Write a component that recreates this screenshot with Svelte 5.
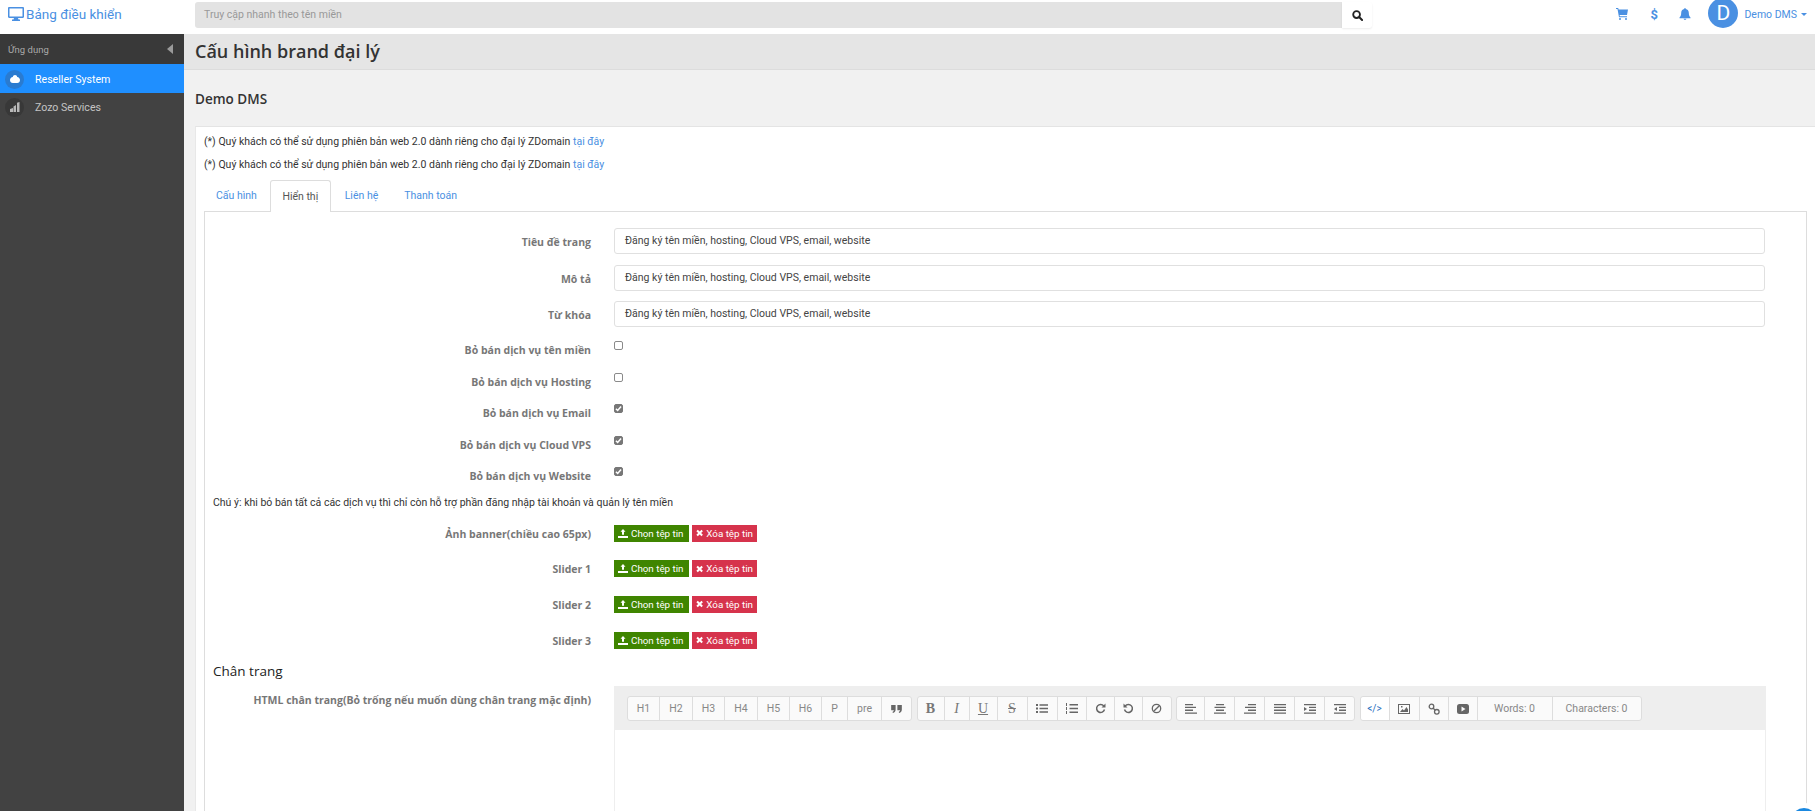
<script>
  const fields = ["Tiêu đề trang", "Mô tả", "Từ khóa"];
  const value = "Đăng ký tên miền, hosting, Cloud VPS, email, website";
  const checks = [
    { label: "Bỏ bán dịch vụ tên miền", on: false },
    { label: "Bỏ bán dịch vụ Hosting", on: false },
    { label: "Bỏ bán dịch vụ Email", on: true },
    { label: "Bỏ bán dịch vụ Cloud VPS", on: true },
    { label: "Bỏ bán dịch vụ Website", on: true }
  ];
  const uploads = ["Ảnh banner(chiều cao 65px)", "Slider 1", "Slider 2", "Slider 3"];
  const headings = [
    { t: "H1", w: 32 }, { t: "H2", w: 33 }, { t: "H3", w: 32 }, { t: "H4", w: 33 },
    { t: "H5", w: 32 }, { t: "H6", w: 32 }, { t: "P", w: 26 }, { t: "pre", w: 34 }
  ];
</script>

<div class="page">
  <header class="topbar">
    <a class="brand">
      <svg width="16" height="14" viewBox="0 0 16 14"><path fill="#4a90e2" d="M1.2 0h13.6c.7 0 1.2.5 1.2 1.2v8.600c0 .7-.5 1.200-1.200 1.200H1.200C.5 11 0 10.500 0 9.800V1.200C0 .5.500 0 1.200 0zM1.500 1.500v8h13v-8zM6 11h4l.5 1.500H12V14H4v-1.500h1.500z"/></svg>
      <span>Bảng điều khiển</span>
    </a>
    <div class="search">
      <div class="search-input">Truy cập nhanh theo tên miền</div>
      <div class="search-btn">
        <svg width="11" height="11" viewBox="0 0 12 12"><circle cx="5" cy="5" r="3.700" fill="none" stroke="#222" stroke-width="2"/><path d="M8 8l3 3" stroke="#222" stroke-width="2.200" stroke-linecap="round"/></svg>
      </div>
    </div>
    <div class="top-right">
      <svg class="ic cart" width="12" height="12" viewBox="0 0 12 12"><path fill="#4a90e2" d="M0 0h2.200l.4 1.500H12l-1 5.500H3.600l.2 1.200H11v1H3L1.500 1H0z"/><circle cx="4" cy="11" r="1" fill="#4a90e2"/><circle cx="10" cy="11" r="1" fill="#4a90e2"/></svg>
      <span class="dollar">$</span>
      <svg class="ic bell" width="12" height="12" viewBox="0 0 12 12"><path fill="#4a90e2" d="M6 0c.5 0 .8.400.8.900C8.700 1.300 9.800 2.800 9.800 4.700c0 2.800.7 3.700 1.700 4.800v.7H.5v-.7c1-1.100 1.700-2 1.700-4.800C2.200 2.800 3.300 1.300 5.200.9 5.200.4 5.500 0 6 0zM4.600 10.800h2.800C7.300 11.500 6.700 12 6 12s-1.300-.5-1.400-1.200z"/></svg>
      <span class="avatar">D</span>
      <span class="user">Demo DMS</span>
      <span class="caret"></span>
    </div>
  </header>

  <div class="body">
    <aside class="sidebar">
      <div class="side-head">
        <span>Ứng dụng</span>
        <span class="collapse"></span>
      </div>
      <div class="side-item active">
        <span class="side-ic">
          <svg width="10" height="8" viewBox="0 0 10 8"><path fill="#fff" d="M5 0c1.200 0 2.100.8 2.200 1.900C8.700 2.100 10 3.200 10 5c0 1.700-1.200 3-2.800 3H2.800C1.200 8 0 6.700 0 5c0-1.800 1.300-2.900 2.800-3.100C2.900.8 3.800 0 5 0z"/></svg>
        </span>
        Reseller System
      </div>
      <div class="side-item">
        <span class="side-ic dark">
          <svg width="10" height="10" viewBox="0 0 10 10"><path fill="#b8b8b8" d="M0 7l3-1v4H0zM3.500 4.500L6 3v7H3.500zM7 .8L9.500 0v10H7z"/></svg>
        </span>
        Zozo Services
      </div>
    </aside>

    <main class="main">
      <div class="title-bar"><h1>Cấu hình brand đại lý</h1></div>
      <h2 class="sub">Demo DMS</h2>

      <section class="card">
        <p class="note">(*) Quý khách có thể sử dụng phiên bản web 2.0 dành riêng cho đại lý ZDomain <a>tại đây</a></p>
        <p class="note">(*) Quý khách có thể sử dụng phiên bản web 2.0 dành riêng cho đại lý ZDomain <a>tại đây</a></p>

        <nav class="tabs">
          <a>Cấu hình</a>
          <a class="on">Hiển thị</a>
          <a>Liên hệ</a>
          <a>Thanh toán</a>
        </nav>

        <div class="panel">
          <div class="text-rows">
            {#each fields as f}
              <div class="row text-row">
                <label>{f}</label>
                <div class="input">{value}</div>
              </div>
            {/each}
          </div>

          {#each checks as c}
            <div class="row check-row">
              <label>{c.label}</label>
              <span class="box" class:on={c.on}>
                {#if c.on}
                  <svg width="7" height="7" viewBox="0 0 9 9"><path d="M1.200 4.800l2.200 2.200 4.400-5" fill="none" stroke="#fff" stroke-width="2"/></svg>
                {/if}
              </span>
            </div>
          {/each}

          <p class="warn">Chú ý: khi bỏ bán tất cả các dịch vụ thì chỉ còn hỗ trợ phần đăng nhập tài khoản và quản lý tên miền</p>

          {#each uploads as u}
            <div class="row upload-row">
              <label>{u}</label>
              <div class="btns">
                <span class="btn green">
                  <svg width="10" height="9" viewBox="0 0 10 9"><path fill="#fff" d="M5 0l2.500 2.800H6v3H4v-3H2.500zM0 7h10v2H0z"/></svg>
                  Chọn tệp tin
                </span>
                <span class="btn red">
                  <svg width="8" height="8" viewBox="0 0 8 8"><path d="M1.200 1.200l5.600 5.600M6.800 1.200L1.200 6.800" stroke="#fff" stroke-width="2.200"/></svg>
                  Xóa tệp tin
                </span>
              </div>
            </div>
          {/each}

          <h3 class="footer-title">Chân trang</h3>

          <div class="row editor-row">
            <label>HTML chân trang(Bỏ trống nếu muốn dùng chân trang mặc định)</label>
            <div class="editor">
              <div class="toolbar">
                <div class="group">
                  {#each headings as h}
                    <span class="tb" style="width:{h.w}px">{h.t}</span>
                  {/each}
                  <span class="tb" style="width:29px"><svg width="11" height="8" viewBox="0 0 12 9"><path fill="#666" d="M0 0h5v5c0 2-1 3.500-3 4L1.500 7.800C2.500 7.400 3 6.700 3 6H0zM7 0h5v5c0 2-1 3.500-3 4L8.500 7.800C9.500 7.400 10 6.700 10 6H7z"/></svg></span>
                </div>
                <div class="group">
                  <span class="tb serif b" style="width:27px">B</span>
                  <span class="tb serif i" style="width:25px">I</span>
                  <span class="tb serif u" style="width:28px">U</span>
                  <span class="tb serif s" style="width:30px">S</span>
                  <span class="tb" style="width:30px"><svg width="12" height="9" viewBox="0 0 12 9"><path fill="#666" d="M0 0h2v2H0zM0 3.500h2v2H0zM0 7h2v2H0zM3.500 .3H12v1.400H3.500zM3.500 3.800H12v1.400H3.500zM3.500 7.300H12v1.400H3.500z"/></svg></span>
                  <span class="tb" style="width:29px"><svg width="12" height="11" viewBox="0 0 12 11"><path fill="#666" d="M0 0h1v3H0zM0 4h1v3H0zM0 8h1v3H0zM3.500 1H12v1.600H3.500zM3.500 4.700H12v1.600H3.500zM3.500 8.400H12V10H3.500z"/></svg></span>
                  <span class="tb" style="width:28px"><svg width="11" height="11" viewBox="0 0 11 11"><path d="M8.800 3a4 4 0 1 0 .7 3.500" fill="none" stroke="#666" stroke-width="1.500"/><path fill="#666" d="M10.500 .5v4h-4z"/></svg></span>
                  <span class="tb" style="width:28px"><svg width="11" height="11" viewBox="0 0 11 11"><path d="M2.200 3a4 4 0 1 1-.7 3.500" fill="none" stroke="#666" stroke-width="1.500"/><path fill="#666" d="M.5 .5v4h4z"/></svg></span>
                  <span class="tb" style="width:28px"><svg width="11" height="11" viewBox="0 0 11 11"><circle cx="5.500" cy="5.500" r="4.200" fill="none" stroke="#666" stroke-width="1.300"/><path d="M2.700 8.300l5.600-5.600" stroke="#666" stroke-width="1.300"/></svg></span>
                </div>
                <div class="group">
                  <span class="tb" style="width:28px"><svg width="12" height="10" viewBox="0 0 12 10"><path fill="#666" d="M0 0h8v1.300H0zM0 2.800h11v1.300H0zM0 5.600h8v1.300H0zM0 8.400h12v1.400H0z"/></svg></span>
                  <span class="tb" style="width:30px"><svg width="12" height="10" viewBox="0 0 12 10"><path fill="#666" d="M2 0h8v1.300H2zM.5 2.800h11v1.300H.500zM2 5.600h8v1.300H2zM0 8.400h12v1.400H0z"/></svg></span>
                  <span class="tb" style="width:30px"><svg width="12" height="10" viewBox="0 0 12 10"><path fill="#666" d="M4 0h8v1.300H4zM1 2.800h11v1.300H1zM4 5.600h8v1.300H4zM0 8.400h12v1.400H0z"/></svg></span>
                  <span class="tb" style="width:30px"><svg width="12" height="10" viewBox="0 0 12 10"><path fill="#666" d="M0 0h12v1.300H0zM0 2.800h12v1.300H0zM0 5.600h12v1.300H0zM0 8.400h12v1.400H0z"/></svg></span>
                  <span class="tb" style="width:30px"><svg width="12" height="10" viewBox="0 0 12 10"><path fill="#666" d="M0 0h12v1.300H0zM5 2.800h7v1.300H5zM5 5.600h7v1.300H5zM0 8.400h12v1.400H0zM0 3l3 2-3 2z"/></svg></span>
                  <span class="tb" style="width:29px"><svg width="12" height="10" viewBox="0 0 12 10"><path fill="#666" d="M0 0h12v1.300H0zM5 2.800h7v1.300H5zM5 5.600h7v1.300H5zM0 8.400h12v1.400H0zM3 3L0 5l3 2z"/></svg></span>
                </div>
                <div class="group">
                  <span class="tb white code" style="width:29px">&lt;/&gt;</span>
                  <span class="tb" style="width:30px"><svg width="12" height="10" viewBox="0 0 12 10"><path fill="#666" d="M0 0h12v10H0zM1 1v8h10V1zM2 8l2.500-3 1.500 1.500L8.500 3 10 5.500V8zM3 2h1.500v1.500H3z" fill-rule="evenodd"/></svg></span>
                  <span class="tb" style="width:29px"><svg width="12" height="12" viewBox="0 0 12 12"><circle cx="3.500" cy="3.500" r="2.300" fill="none" stroke="#666" stroke-width="1.300"/><circle cx="8.800" cy="8.800" r="2.300" fill="none" stroke="#666" stroke-width="1.300"/><path d="M5 5l2.200 2.200" stroke="#666" stroke-width="1.300"/></svg></span>
                  <span class="tb" style="width:29px"><svg width="12" height="10" viewBox="0 0 12 10"><rect width="12" height="10" rx="2.500" fill="#666"/><path fill="#fafafa" d="M4.500 2.500l4 2.500-4 2.500z"/></svg></span>
                  <span class="tb wide" style="width:75px">Words: 0</span>
                  <span class="tb wide" style="width:88px">Characters: 0</span>
                </div>
              </div>
              <div class="edit-area"></div>
            </div>
          </div>
        </div>
      </section>
    </main>
  </div>

  <span class="chat"></span>
</div>

<style>
  :global(body) {
    margin: 0;
    background: #f1f1f1;
    font-family: Roboto, "Liberation Sans", sans-serif;
  }

  .page {
    height: 811px;
    overflow: hidden;
    position: relative;
  }

  /* top bar */
  .topbar {
    height: 34px;
    background: #fff;
    display: flex;
    align-items: flex-start;
  }

  .brand {
    width: 195px;
    height: 28px;
    padding-left: 8px;
    box-sizing: border-box;
    display: flex;
    align-items: center;
    gap: 2px;
    color: #4a90e2;
    font-size: 13.500px;
  }

  .search {
    margin-top: 2px;
    width: 1177px;
    display: flex;
  }

  .search-input {
    flex: 1;
    height: 26px;
    line-height: 25px;
    padding-left: 9px;
    background: #e3e3e3;
    border-radius: 3px 0 0 3px;
    color: #999;
    font-size: 10.500px;
  }

  .search-btn {
    width: 30px;
    height: 26px;
    display: flex;
    align-items: center;
    justify-content: center;
    border-radius: 0 3px 3px 0;
    box-shadow: 0 1px 2px rgba(0, 0, 0, 0.08);
  }

  .top-right {
    margin-left: auto;
    height: 28px;
    display: flex;
    align-items: center;
    padding-right: 8px;
    color: #4a90e2;
  }

  .ic { margin-right: 20px; }
  .cart { margin-right: 22px; }
  .bell { margin-right: 17px; }

  .dollar {
    font-size: 13px;
    font-weight: 700;
    width: 13px;
    margin-right: 16px;
  }

  .avatar {
    width: 30px;
    height: 30px;
    margin-top: -2px;
    border-radius: 50%;
    background: #4a90e2;
    color: #fff;
    font-size: 21px;
    line-height: 30px;
    text-align: center;
  }

  .user {
    margin-left: 6px;
    font-size: 10.500px;
  }

  .caret {
    margin-left: 4px;
    border: 3px solid transparent;
    border-top-color: #4a90e2;
    border-bottom: 0;
  }

  .body {
    display: flex;
    height: 777px;
  }

  /* sidebar */
  .sidebar {
    width: 184px;
    flex: none;
    background: #424242;
    color: #c4c4c4;
  }

  .side-head {
    height: 30px;
    background: #393939;
    display: flex;
    align-items: center;
    justify-content: space-between;
    padding: 0 11px 0 8px;
    font-size: 9.500px;
    color: #aaa;
  }

  .collapse {
    border: 5px solid transparent;
    border-right: 6px solid #9a9a9a;
    border-left: 0;
  }

  .side-item {
    height: 29px;
    display: flex;
    align-items: center;
    font-size: 10.600px;
    padding-left: 5px;
  }

  .side-item.active {
    height: 28px;
    padding-top: 1px;
    background: #1f8fff;
    color: #fff;
  }

  .side-item + .side-item { margin-top: -1px; height: 30px; }

  .side-ic {
    width: 19px;
    height: 19px;
    margin-right: 11px;
    border-radius: 50%;
    background: #2a7bd0;
    display: flex;
    align-items: center;
    justify-content: center;
  }

  .side-ic.dark { background: #383838; }

  /* main */
  .main {
    flex: 1;
    min-width: 0;
  }

  .title-bar {
    height: 35px;
    background: #e5e5e5;
    border-bottom: 1px solid #dcdcdc;
    padding-left: 11px;
  }

  h1 {
    margin: 0;
    font-family: "Open Sans", sans-serif;
    font-size: 18px;
    font-weight: 600;
    line-height: 35px;
    color: #333;
  }

  .sub {
    margin: 0;
    padding: 20px 0 0 11px;
    height: 36px;
    font-family: "Open Sans", sans-serif;
    font-size: 13.500px;
    font-weight: 600;
    line-height: 19px;
    color: #333;
  }

  .card {
    margin-left: 11px;
    height: 700px;
    padding: 0 8px;
    background: #fff;
    border-top: 1px solid #e4e4e4;
    border-left: 1px solid #e8e8e8;
  }

  .note {
    margin: 0;
    height: 23px;
    line-height: 23px;
    font-size: 10.500px;
    color: #333;
  }

  .note:first-child { margin-top: 3px; }

  .note a { color: #4a90e2; }

  .tabs {
    display: flex;
    height: 32px;
    margin-top: 4px;
    font-size: 10.500px;
    color: #4a90e2;
  }

  .tabs a {
    padding: 0 12px;
    margin-right: 2px;
    line-height: 32px;
    color: #4a90e2;
  }

  .tabs a:first-child { margin-right: 1px; }

  .tabs a.on {
    padding: 0 11.500px;
    color: #555;
    background: #fff;
    height: 32px;
    box-sizing: border-box;
    border: 1px solid #ddd;
    border-bottom: 0;
    border-radius: 3px 3px 0 0;
    line-height: 31px;
    position: relative;
    z-index: 1;
  }

  .panel {
    border: 1px solid #ddd;
    height: 700px;
    padding-top: 16px;
    margin-top: -1px;
  }

  .row {
    display: flex;
  }

  .row label {
    width: 386px;
    margin-right: 23px;
    text-align: right;
    flex: none;
    font-family: "Open Sans", sans-serif;
    font-weight: 700;
    font-size: 10.500px;
    color: #777;
  }

  .text-rows { height: 103px; }

  .text-row {
    height: 36.500px;
  }

  .text-row label { line-height: 28px; }

  .input {
    width: 1151px;
    height: 26px;
    box-sizing: border-box;
    border: 1px solid #e0e0e0;
    border-radius: 3px;
    line-height: 24px;
    padding-left: 10px;
    font-size: 10.500px;
    color: #444;
  }

  .check-row {
    height: 31.500px;
  }

  .check-row label { line-height: 38px; }

  .box {
    width: 7px;
    height: 7px;
    margin-top: 10px;
    border: 1px solid #8a8a8a;
    border-radius: 2px;
    background: #fff;
    display: block;
  }

  .box.on {
    background: #777;
    border-color: #777;
  }

  .box svg { display: block; }

  .warn {
    margin: 0 0 0 8px;
    height: 31px;
    line-height: 28px;
    font-size: 10.500px;
    color: #333;
  }

  .upload-row {
    height: 35.700px;
  }

  .upload-row label { line-height: 28px; }

  .btns {
    display: flex;
    gap: 3px;
    margin-top: 5px;
  }

  .btn {
    height: 17px;
    display: flex;
    align-items: center;
    gap: 3px;
    padding: 0 4px;
    font-size: 9.800px;
    white-space: nowrap;
    color: #fff;
  }

  .green { width: 75px; box-sizing: border-box; background: #3f8500; }
  .red { width: 65px; box-sizing: border-box; background: #d6334c; }

  .footer-title {
    margin: -3px 0 0 8px;
    height: 27px;
    font-family: "Open Sans", sans-serif;
    font-size: 13.500px;
    font-weight: 500;
    line-height: 24px;
    color: #222;
  }

  .editor-row label { line-height: 28px; }

  .editor {
    width: 1152px;
    box-sizing: border-box;
    border-left: 1px solid #eee;
    border-right: 1px solid #eee;
  }

  .toolbar {
    height: 44px;
    background: #eee;
    box-sizing: border-box;
    padding: 10px 0 0 13px;
    margin: 0 -1px;
    display: flex;
    gap: 4.500px;
  }

  .group {
    display: flex;
    height: 25px;
    border: 1px solid #ddd;
    border-radius: 3px;
    background: #fafafa;
    box-sizing: border-box;
  }

  .tb {
    display: flex;
    align-items: center;
    justify-content: center;
    box-sizing: border-box;
    border-right: 1px solid #ddd;
    font-size: 10.500px;
    color: #888;
  }

  .tb:last-child { border-right: 0; }

  .serif {
    font-family: "Liberation Serif", serif;
    font-size: 14px;
    color: #777;
  }

  .b { font-weight: 700; }
  .i { font-style: italic; }
  .u { text-decoration: underline; }
  .s { text-decoration: line-through; }

  .white { background: #fff; border-radius: 3px 0 0 3px; }
  .code { color: #2a6fc0; font-size: 10px; }

  .edit-area {
    height: 100px;
    background: #fff;
  }

  .chat {
    position: absolute;
    left: 1791px;
    top: 808px;
    width: 26px;
    height: 26px;
    border-radius: 50%;
    background: #1a88e0;
    box-shadow: 0 0 0 5px #fff;
  }
</style>
